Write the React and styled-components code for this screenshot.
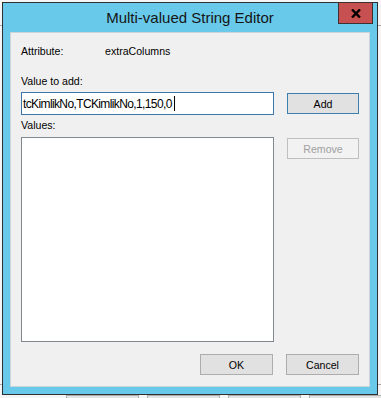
import React from 'react';
import styled, { createGlobalStyle } from 'styled-components';

const GlobalStyle = createGlobalStyle`
    html, body {
        margin: 0;
        padding: 0;
        background: #f5f5f5;
    }
    * {
        box-sizing: border-box;
    }
`

const App = () => {
    return (
        <Page>
            <GlobalStyle />
            <Backdrop>
                <BackLine $top={25} />
                <BackLine $top={358} />
                <BackButtons>
                    <BackButton />
                    <BackButton />
                    <BackButton />
                    <BackButton />
                </BackButtons>
            </Backdrop>

            <Window>
                <TitleBar>Multi-valued String Editor</TitleBar>
                <CloseButton>
                    <svg width="10" height="9" viewBox="0 0 10 9">
                        <path d="M1 0.5 L9 8.5 M9 0.5 L1 8.5" stroke="#000" strokeWidth="2.4" />
                    </svg>
                </CloseButton>

                <Client>
                    <AttrRow>
                        <AttrLabel>Attribute:</AttrLabel>
                        <span>extraColumns</span>
                    </AttrRow>

                    <Label $gap={17}>Value to add:</Label>

                    <EditorGrid>
                        <TextBox>
                            tcKimlikNo,TCKimlikNo,1,150,0
                            <Caret />
                        </TextBox>
                        <Button $variant="default">Add</Button>

                        <Label $gap={4}>Values:</Label>
                        <div />

                        <ListBox />
                        <Button $variant="disabled" $top>Remove</Button>
                    </EditorGrid>

                    <Footer>
                        <Button $wide>OK</Button>
                        <Button $wide>Cancel</Button>
                    </Footer>
                </Client>
            </Window>
        </Page>
    )
}

const Page = styled.div`
    position: relative;
    width: 381px;
    height: 398px;
    overflow: hidden;
    padding: 2px 0 0 2px;
    font-family: "Liberation Sans", Arial, sans-serif;
`

// the application window that sits underneath the dialog
const Backdrop = styled.div`
    position: absolute;
    inset: 0;
    display: flex;
    flex-direction: column;
    z-index: 0;
`

const BackLine = styled.div`
    height: 1px;
    margin-top: ${p => p.$top}px;
    background: #a9a9a9;
`

const BackButtons = styled.div`
    display: flex;
    gap: 8px;
    margin-top: 10px;
    padding-left: 66px;
    flex: 1;
`

const BackButton = styled.div`
    width: 73px;
    flex-shrink: 0;
    border: 1px solid #adadad;
    border-bottom: none;
    background: #e3e3e3;
`

const Window = styled.div`
    position: relative;
    z-index: 1;
    width: 376px;
    height: 393px;
    border: 1px solid #2f2f2f;
    background: #68c9ea;
    padding: 0 7px 7px 7px;
    display: flex;
    flex-direction: column;
`

const TitleBar = styled.div`
    height: 29px;
    display: flex;
    align-items: center;
    justify-content: center;
    font-size: 15px;
    color: #151515;
    padding-bottom: 1px;
`

const CloseButton = styled.div`
    position: absolute;
    top: -1px;
    right: 4px;
    width: 35px;
    height: 22px;
    background: #c75050;
    border: 1px solid #3d3030;
    display: flex;
    align-items: center;
    justify-content: center;
`

const Client = styled.div`
    width: 360px;
    height: 355px;
    background: #f0f0f0;
    border: 1px solid #c9d5db;
    padding: 12px 10px 0 10px;
    display: flex;
    flex-direction: column;
    font-size: 10.6px;
    color: #000;
`

const AttrRow = styled.div`
    display: flex;
    height: 13px;
    line-height: 13px;
`

const AttrLabel = styled.span`
    width: 84px;
`

const Label = styled.div`
    height: 13px;
    line-height: 13px;
    margin-top: ${p => p.$gap}px;
`

const EditorGrid = styled.div`
    display: grid;
    grid-template-columns: 253px 72px;
    column-gap: 13px;
    margin-top: 4px;
`

const TextBox = styled.div`
    height: 23px;
    border: 1px solid #3a76a9;
    background: #fff;
    padding-left: 1px;
    display: flex;
    align-items: center;
    font-size: 12px;
    letter-spacing: -0.62px;
    white-space: nowrap;
`

const Caret = styled.span`
    display: inline-block;
    width: 1px;
    height: 15px;
    margin-left: 2px;
    background: #000;
`

const ListBox = styled.div`
    height: 205px;
    margin-top: 5px;
    border: 1px solid #828790;
    background: #fff;
`

const Button = styled.div`
    width: ${p => (p.$wide ? 73 : 72)}px;
    height: 21px;
    align-self: ${p => (p.$top ? 'start' : 'center')};
    margin-top: ${p => (p.$top ? 6 : 0)}px;
    display: flex;
    align-items: center;
    justify-content: center;
    font-size: 10.6px;
    border: 1px solid ${p =>
        p.$variant === 'default' ? '#3c7fb1' : p.$variant === 'disabled' ? '#bfbfbf' : '#adadad'};
    background: ${p => (p.$variant === 'disabled' ? '#f2f2f2' : '#e1e1e1')};
    color: ${p => (p.$variant === 'disabled' ? '#a0a0a0' : '#000')};
`

const Footer = styled.div`
    display: flex;
    justify-content: flex-end;
    gap: 13px;
    margin-top: 12px;
`

export default App;
